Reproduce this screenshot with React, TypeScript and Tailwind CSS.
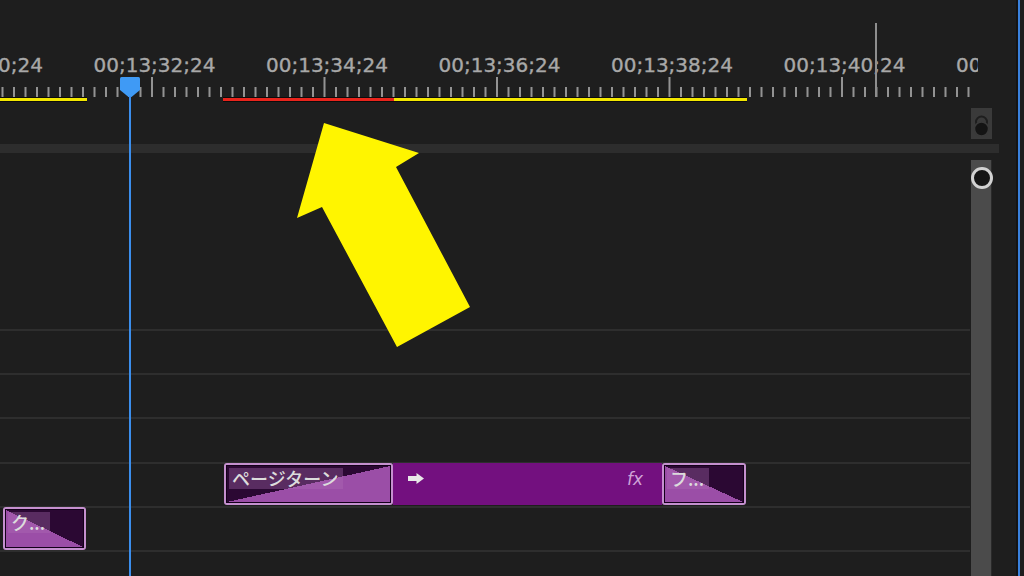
const TICK_START = 2.5;
const TICK_STEP = 11.5;
const MAJOR_STEP = 172.5;
const FIRST_MAJOR = 152;

const bars = [
  { x1: 0, x2: 87, color: "#f2e600" },
  { x1: 223, x2: 394, color: "#e8241c" },
  { x1: 394, x2: 747, color: "#f2e600" },
];

function Ruler() {
  const ticks = [];
  for (let k = 0; TICK_START + k * TICK_STEP <= 969; k++) {
    const x = TICK_START + k * TICK_STEP;
    const tall = (k - 13) % 15 === 0;
    ticks.push(
      <rect key={k} x={x - 1} y={tall ? 77 : 87} width={2} height={tall ? 20 : 10} fill="#939393" />
    );
  }

  const labels = [];
  for (let i = -1; i <= 6; i++) {
    const sec = 32 + i * 2;
    labels.push(
      <text
        key={i}
        x={FIRST_MAJOR + MAJOR_STEP * i + 2.5}
        y={72}
        textAnchor="middle"
        fill="#a8a8a8"
        stroke="#a8a8a8"
        strokeWidth="0.35"
        fontSize="20"
        fontFamily="'DejaVu Sans', sans-serif"
      >
        {`00;13;${String(sec).padStart(2, "0")};24`}
      </text>
    );
  }

  return (
    <div className="h-[104px] w-[978px] shrink-0 overflow-hidden">
      <svg width="978" height="104" className="block">
        {labels}
        {ticks}
        {/* in/out marker */}
        <rect x="875" y="23" width="2" height="74" fill="#8e8e8e" />
        {/* render bars */}
        {bars.map((b, i) => (
          <g key={i}>
            <rect x={b.x1} y="97" width={b.x2 - b.x1} height="5" fill="#0c0c0c" />
            <rect x={b.x1} y="98" width={b.x2 - b.x1} height="3" fill={b.color} />
          </g>
        ))}
        {/* playhead head */}
        <path d="M121.5 77 H138.5 Q140 77 140 78.5 V90 L131.5 97 H128.5 L120 90 V78.5 Q120 77 121.5 77 Z" fill="#3f9af5" />
      </svg>
    </div>
  );
}

function ScrollButtons() {
  return (
    <div className="mt-[4px] h-[31px] w-[21px] bg-[#3a3a3a]">
      <svg width="21" height="31" className="block">
        <circle cx="10.5" cy="14" r="5.5" fill="none" stroke="#1e1e1e" strokeWidth="2" />
        <circle cx="10.5" cy="21" r="7" fill="#141414" stroke="#3a3a3a" strokeWidth="1.5" />
      </svg>
    </div>
  );
}

function ScrollTrack() {
  return (
    <div className="ml-[1px] flex w-[21px] flex-col pt-[7px]">
      <div className="relative flex-1 border-r border-[#2a2a2a] bg-[#4b4b4b]">
        <svg width="24" height="24" className="absolute left-[-1.5px] top-[6px] block overflow-visible">
          <circle cx="12" cy="12" r="9.5" fill="#161616" stroke="#d2d2d2" strokeWidth="3" />
        </svg>
      </div>
    </div>
  );
}

type Transition = {
  left: number;
  width: number;
  height: number;
  label: string;
  side: "start" | "end";
};

function TransitionClip({ left, width, height, label, side }: Transition) {
  return (
    <div
      className="absolute top-[-1px] rounded-[3px] border-2 border-[#c590cf] bg-[#c590cf]"
      style={{ left, width, height }}
    >
      <div
        className={
          side === "end"
            ? "relative h-full w-full overflow-hidden border border-[#14001a] bg-[linear-gradient(to_bottom_right,#2b0833_50%,#9b4ea7_50%)]"
            : "relative h-full w-full overflow-hidden border border-[#14001a] bg-[linear-gradient(to_bottom_left,#2b0833_50%,#9b4ea7_50%)]"
        }
      >
        <span className="absolute left-[2px] top-[2px] h-[21px] whitespace-nowrap bg-[#b070b8]/35 pl-[3px] pr-[5px] font-['Noto_Sans_CJK_JP',sans-serif] text-[18px] font-medium leading-[21px] text-[#dcdcdc]">
          {label}
        </span>
      </div>
    </div>
  );
}

function NestedClip() {
  return (
    <div className="absolute left-[393px] top-[-1px] h-[42px] w-[269px] bg-[#73107f]">
      <svg width="16" height="11" className="absolute left-[15px] top-[10px] block">
        <polygon points="0,3 8.5,3 8.5,0 16,5.5 8.5,11 8.5,8 0,8" fill="#e8e8e8" />
      </svg>
      <span className="absolute left-[234px] top-[6px] font-['DejaVu_Sans',sans-serif] text-[17px] italic leading-[20px] text-[#cfa3d8]">
        fx
      </span>
    </div>
  );
}

function Tracks() {
  return (
    <div className="flex w-[970px] flex-col">
      <div className="h-[176px] shrink-0" />
      <div className="h-[44px] shrink-0 border-t-2 border-[#2e2e2e]" />
      <div className="h-[44px] shrink-0 border-t-2 border-[#2e2e2e]" />
      <div className="h-[45px] shrink-0 border-t-2 border-[#2e2e2e]" />
      <div className="relative h-[44px] shrink-0 border-t-2 border-[#2e2e2e]">
        <TransitionClip left={224} width={169} height={42} label="ページターン" side="end" />
        <NestedClip />
        <TransitionClip left={662} width={84} height={42} label="フ..." side="start" />
      </div>
      <div className="relative h-[44px] shrink-0 border-t-2 border-[#2e2e2e]">
        <TransitionClip left={3} width={83} height={43} label="ク..." side="start" />
      </div>
      <div className="flex-1 border-t-2 border-[#2e2e2e]" />
    </div>
  );
}

function ArrowOverlay() {
  return (
    <svg width="1024" height="576" className="pointer-events-none absolute left-0 top-0 block">
      <polygon points="324,123 419,153 396,167 470,307 397,347 322,207 297,218" fill="#fff500" />
    </svg>
  );
}

export default function App() {
  return (
    <div className="relative flex h-[576px] w-[1024px] overflow-hidden bg-[#1e1e1e]">
      <div className="flex w-[1016px] shrink-0 flex-col">
        <Ruler />
        <div className="flex h-[40px] shrink-0">
          <div className="w-[971px] shrink-0" />
          <ScrollButtons />
        </div>
        <div className="h-[9px] w-[999px] shrink-0 bg-[#2d2d2d]" />
        <div className="flex flex-1">
          <Tracks />
          <ScrollTrack />
        </div>
      </div>
      <div className="w-[2px] shrink-0 bg-[#141414]" />
      <div className="w-[2px] shrink-0 bg-[#3a82de]" />
      <div className="flex-1" />

      {/* playhead line */}
      <div className="pointer-events-none absolute bottom-0 left-[129px] top-[96px] w-[2px] bg-[#3b8eec]" />
      <ArrowOverlay />
    </div>
  );
}
